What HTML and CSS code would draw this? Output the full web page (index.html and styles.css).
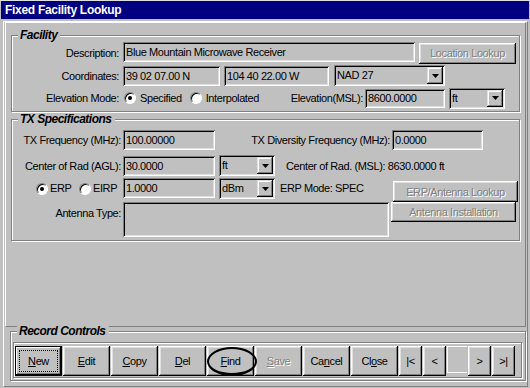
FILE: index.html
```html
<!DOCTYPE html>
<html lang="en">
<head>
    <meta charset="UTF-8">
    <title>Fixed Facility Lookup</title>
    <link rel="stylesheet" href="styles.css">
</head>
<body>
<div class="window">
    <div class="titlebar">Fixed Facility Lookup</div>
    <div class="client">
        <div class="main">
            <!-- Facility -->
            <div class="group facility">
                <span class="legend">Facility</span>
                <div class="row fr1">
                    <span class="lbl">Description:</span>
                    <div class="field w-desc">Blue Mountain Microwave Receiver</div>
                    <div class="btn disabled w-loc">Location Lookup</div>
                </div>
                <div class="row fr2">
                    <span class="lbl">Coordinates:</span>
                    <div class="field w-lat">39 02 07.00 N</div>
                    <div class="field w-lon">104 40 22.00 W</div>
                    <div class="select w-nad"><span class="val">NAD 27</span><span class="arrow"><svg width="7" height="4"><polygon points="0,0 7,0 3.5,4"/></svg></span></div>
                </div>
                <div class="row fr3">
                    <span class="lbl">Elevation Mode:</span>
                    <span class="radio on r-spec"></span><span class="rtext">Specified</span>
                    <span class="radio r-interp"></span><span class="rtext">Interpolated</span>
                    <span class="lbl-msl">Elevation(MSL):</span>
                    <div class="field w-elev">8600.0000</div>
                    <div class="select w-unit"><span class="val">ft</span><span class="arrow"><svg width="7" height="4"><polygon points="0,0 7,0 3.5,4"/></svg></span></div>
                </div>
            </div>

            <!-- TX Specifications -->
            <div class="group tx">
                <span class="legend">TX Specifications</span>
                <div class="row tr1">
                    <span class="lbl">TX Frequency (MHz):</span>
                    <div class="field w-num">100.00000</div>
                    <span class="lbl-div">TX Diversity Frequency (MHz):</span>
                    <div class="field w-divf">0.0000</div>
                </div>
                <div class="row tr2">
                    <span class="lbl">Center of Rad (AGL):</span>
                    <div class="field w-num">30.0000</div>
                    <div class="select w-small"><span class="val">ft</span><span class="arrow"><svg width="7" height="4"><polygon points="0,0 7,0 3.5,4"/></svg></span></div>
                    <span class="info">Center of Rad. (MSL): 8630.0000 ft</span>
                </div>
                <div class="row tr3">
                    <div class="radios">
                        <span class="radio on"></span><span class="rtext erp">ERP</span>
                        <span class="radio"></span><span class="rtext eirp">EIRP</span>
                    </div>
                    <div class="field w-num">1.0000</div>
                    <div class="select w-small"><span class="val">dBm</span><span class="arrow"><svg width="7" height="4"><polygon points="0,0 7,0 3.5,4"/></svg></span></div>
                    <span class="info mode">ERP Mode: SPEC</span>
                    <div class="btn disabled w-side top">ERP/Antenna Lookup</div>
                </div>
                <div class="row tr4">
                    <span class="lbl">Antenna Type:</span>
                    <div class="field area"></div>
                    <div class="btn disabled w-side">Antenna Installation</div>
                </div>
            </div>
        </div>

        <!-- Record Controls -->
        <div class="group record">
            <span class="legend">Record Controls</span>
            <div class="toolbar">
                <div class="btn rec default"><span class="focus"><u>N</u>ew</span></div>
                <div class="btn rec"><u>E</u>dit</div>
                <div class="btn rec"><u>C</u>opy</div>
                <div class="btn rec"><u>D</u>el</div>
                <div class="btn rec find"><u>F</u>ind</div>
                <div class="btn rec disabled"><u>S</u>ave</div>
                <div class="btn rec">Ca<u>n</u>cel</div>
                <div class="btn rec">Cl<u>o</u>se</div>
                <div class="btn nav">|&lt;</div>
                <div class="btn nav">&lt;</div>
                <div class="navfield"></div>
                <div class="btn nav">&gt;</div>
                <div class="btn nav">&gt;|</div>
            </div>
        </div>
    </div>
</div>
</body>
</html>
```

FILE: styles.css
```css
body {
    margin: 0;
    background: #c0c0c0;
    font-family: "Liberation Sans", Arial, sans-serif;
    font-size: 11px;
    letter-spacing: -0.4px;
    color: #000;
    width: 530px;
    height: 388px;
    overflow: hidden;
}
.window {
    height: 388px;
    box-sizing: border-box;
    border-top: 1px solid #dfdfdf;
}
.titlebar {
    height: 18px;
    margin: 0 1px;
    padding-left: 4px;
    background: #000080;
    color: #fff;
    font-size: 12px;
    font-weight: bold;
    letter-spacing: -0.3px;
    line-height: 18px;
}
.client {
    margin: 2px 2px 0 3px;
    height: 366px;
    box-sizing: border-box;
    border: 1px solid;
    border-color: #fff #808080 #808080 #fff;
    padding: 0 1px 0 1px;
}
.main {
    height: 305px;
    box-sizing: border-box;
    border: 1px solid;
    border-color: #fff #808080 #808080 #fff;
    padding: 12px 5px 0 5px;
}

/* etched group box */
.group {
    position: relative;
    border: 1px solid #808080;
    box-shadow: 1px 1px 0 #fff, inset 1px 1px 0 #fff;
}
.legend {
    position: absolute;
    top: -7px;
    left: 6px;
    padding: 0 3px 0 2px;
    background: #c0c0c0;
    font-size: 12px;
    font-weight: bold;
    font-style: italic;
    letter-spacing: -0.5px;
    line-height: 13px;
}
.facility {
    padding: 6px 0 3px 0;
}
.tx {
    margin-top: 7px;
    padding: 10px 0 3px 0;
}

.row {
    display: flex;
    align-items: center;
}
.lbl {
    width: 107px;
    margin-right: 4px;
    text-align: right;
    white-space: nowrap;
}
.tx .lbl {
    width: 109px;
    margin-right: 2px;
}

/* sunken field */
.field, .select {
    box-sizing: border-box;
    height: 20px;
    padding: 0 3px;
    line-height: 20px;
    white-space: nowrap;
    overflow: hidden;
    box-shadow: inset 1px 1px #808080, inset -1px -1px #fff, inset 2px 2px #000, inset -2px -2px #dfdfdf;
}
.select {
    display: flex;
    height: 21px;
    padding: 2px 2px 2px 3px;
    line-height: 17px;
}
.select .val {
    flex: 1;
}
.arrow {
    width: 16px;
    height: 17px;
    box-sizing: border-box;
    display: flex;
    align-items: center;
    justify-content: center;
    box-shadow: inset -1px -1px #000, inset 1px 1px #dfdfdf, inset -2px -2px #808080, inset 2px 2px #fff;
}
.arrow svg {
    display: block;
}

/* raised button */
.btn {
    box-sizing: border-box;
    display: flex;
    align-items: center;
    justify-content: center;
    white-space: nowrap;
    box-shadow: inset -1px -1px #000, inset 1px 1px #fff, inset -2px -2px #808080, inset 2px 2px #dfdfdf;
}
.btn.disabled {
    color: #808080;
    text-shadow: 1px 1px 0 #fff;
}

/* facility rows */
.fr1 { height: 22px; }
.fr2 { height: 21px; margin-top: 1px; }
.fr3 { height: 20px; margin-top: 2px; }
.w-desc { width: 292px; }
.w-loc { width: 97px; height: 21px; margin-left: 4px; }
.fr1 .field { align-self: flex-start; }
.w-lat { width: 97px; margin-top: 1px; }
.w-lon { width: 105px; margin-left: 4px; margin-top: 1px; }
.w-nad { width: 111px; margin-left: 5px; }

.radio {
    position: relative;
    width: 12px;
    height: 12px;
    flex: none;
    box-sizing: border-box;
    border-radius: 50%;
    border: 1px solid;
    border-color: #808080 #fff #fff #808080;
    background: #fff;
    box-shadow: inset 1px 1px 0 #000;
}
.radio.on::after {
    content: "";
    position: absolute;
    left: 3px;
    top: 3px;
    width: 4px;
    height: 4px;
    border-radius: 50%;
    background: #000;
}
.rtext {
    margin-left: 4px;
}
.r-spec { margin-left: 1px; }
.r-interp { margin-left: 8px; }
.lbl-msl {
    flex: 1;
    text-align: right;
    margin-right: 2px;
}
.w-elev { width: 80px; height: 19px; line-height: 19px; }
.w-unit { width: 56px; margin-left: 4px; margin-right: 14px; }

/* tx rows */
.tr1 { height: 20px; }
.tr2 { height: 21px; margin-top: 5px; }
.tr3 { height: 24px; margin-top: 2px; align-items: flex-start; }
.tr4 { height: 35px; align-items: flex-start; }
.w-num { width: 92px; }
.lbl-div {
    width: 175px;
    margin-right: 2px;
    text-align: right;
    white-space: nowrap;
}
.w-divf { width: 91px; }
.w-small { width: 56px; margin-left: 4px; }
.info { margin-left: 11px; white-space: nowrap; }
.tr3 .info { line-height: 21px; }
.info.mode { margin-left: 5px; }
.radios {
    display: flex;
    align-items: center;
    height: 21px;
    padding-left: 24px;
}
.radios .rtext {
    margin-left: 2px;
    line-height: 21px;
}
.erp { width: 29px; }
.eirp { width: 30px; }
.w-side {
    width: 125px;
    height: 21px;
    margin-left: auto;
    margin-right: 1px;
}
.w-side.top { margin-top: 3px; }
.tr4 .lbl { line-height: 20px; margin-top: 1px; }
.area { width: 266px; height: 35px; }
.tr4 .w-side { height: 20px; margin-left: 2px; }

/* record controls */
.record {
    margin: 4px 0 0 5px;
    padding: 10px 3px 2px 1px;
}
.toolbar {
    display: flex;
    gap: 1px;
    margin-left: 1px;
    padding: 3px 1px 1px 1px;
    border: 1px solid #808080;
    box-shadow: 1px 1px 0 #fff, inset 1px 1px 0 #fff;
}
.rec {
    width: 47px;
    height: 30px;
}
.default {
    box-shadow: inset 0 0 0 1px #000, inset -2px -2px #000, inset 2px 2px #fff, inset -3px -3px #808080;
}
.focus {
    display: flex;
    align-items: center;
    justify-content: center;
    width: 37px;
    height: 20px;
    border: 1px dotted #000;
}
.find {
    position: relative;
}
.find::after {
    content: "";
    position: absolute;
    left: 0;
    top: 1px;
    width: 50px;
    height: 29px;
    box-sizing: border-box;
    border: 2px solid #000;
    border-bottom-width: 3px;
    border-radius: 50%;
}
.nav {
    width: 23px;
    height: 30px;
}
.navfield {
    width: 20px;
    height: 27px;
    box-sizing: border-box;
    border: 1px solid #fff;
    border-right: none;
}
```
